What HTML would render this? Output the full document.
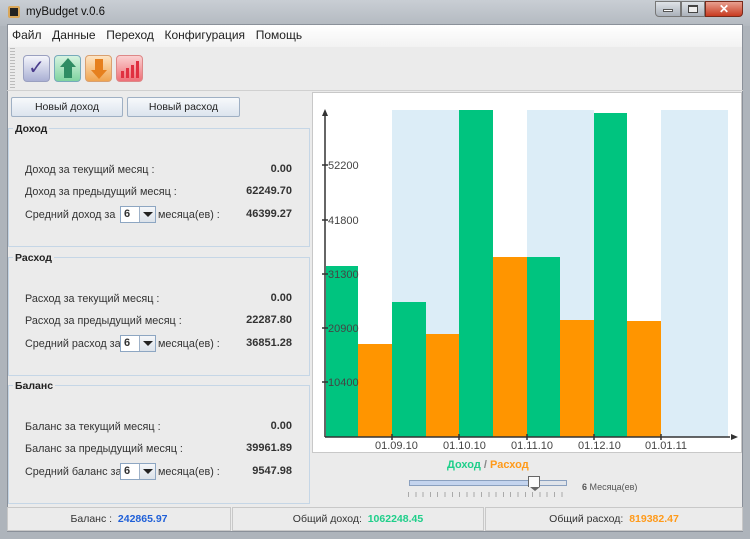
<!DOCTYPE html><html><head><meta charset="utf-8"><style>
*{margin:0;padding:0;box-sizing:border-box}
body{width:750px;height:539px;overflow:hidden;background:#aeb4bb;font-family:"Liberation Sans",sans-serif;font-size:11px;color:#333;position:relative}
.a{position:absolute}
.grp{position:absolute;left:8px;width:302px;border:1px solid #c5d6e6;background:#ebebeb}
.grp .t{position:absolute;left:4px;top:-6px;font-weight:bold;font-size:10.5px;background:#ebebeb;padding:0 2px;color:#222}
.lbl{position:absolute;left:16px;font-size:10.8px;color:#333}
.val{position:absolute;right:17px;font-weight:bold;font-size:11px;color:#333}
.cb{position:absolute;width:36px;height:17px;border:1px solid #8da6c2;background:#fff;font-weight:bold;font-size:11px;padding:1px 0 0 3px}
.cb i{position:absolute;right:0;top:0;width:16px;height:15px;border-left:1px solid #9fb2c8;background:linear-gradient(#f4f6f9,#dbe2ea)}
.cb i:after{content:"";position:absolute;left:3px;top:5px;border:5px solid transparent;border-top:5px solid #222;border-bottom:0}
.btn{position:absolute;top:97px;height:20px;border:1px solid #9fb0c4;border-radius:2px;background:linear-gradient(#f7f9fb,#dce4ee);text-align:center;font-size:10.5px;line-height:18px;color:#222}
.ic{position:absolute;top:55px;width:27px;height:27px;border-radius:4px}
</style></head><body>
<div class="a" style="left:0;top:0;width:750px;height:26px;background:linear-gradient(#c9ced4,#b3b9c0)"></div>
<div class="a" style="left:8px;top:6px;width:12px;height:12px;background:#222;border:2px solid #d9a75b;border-radius:2px"></div>
<div class="a" style="left:26px;top:6px;font-size:11.5px;color:#111">myBudget v.0.6</div>
<div class="a" style="left:655px;top:1px;width:26px;height:16px;border:1px solid #777;border-radius:0 0 0 4px;background:linear-gradient(#dfe3e8,#aab1ba)"></div>
<div class="a" style="left:663px;top:9px;width:10px;height:3px;background:#fff;border:1px solid #555"></div>
<div class="a" style="left:681px;top:1px;width:24px;height:16px;border:1px solid #777;background:linear-gradient(#dfe3e8,#aab1ba)"></div>
<div class="a" style="left:688px;top:5px;width:10px;height:8px;border:1px solid #444;border-top-width:2px;background:#eee"></div>
<div class="a" style="left:705px;top:1px;width:38px;height:16px;border:1px solid #7a2a1a;border-radius:0 0 4px 0;background:linear-gradient(#e8a090,#c83a20);color:#fff;font-weight:bold;text-align:center;font-size:12px;line-height:14px">✕</div>
<div class="a" style="left:7px;top:24px;width:736px;height:508px;background:#ebebeb;border:1px solid #8a9099"></div>
<div class="a" style="left:8px;top:25px;width:734px;height:22px;background:linear-gradient(#fff,#f2f2f2)"></div>
<div class="a" style="left:12px;top:28px;font-size:12px;color:#222;word-spacing:2px">Файл&nbsp; Данные&nbsp; Переход&nbsp; Конфигурация&nbsp; Помощь</div>
<div class="a" style="left:10px;top:48px;width:5px;height:40px;background:repeating-linear-gradient(#bbb 0 1px,transparent 1px 3px)"></div>
<div class="ic" style="left:23px;background:linear-gradient(#f4f5fb,#aab0d4);border:1px solid #9aa0c0;color:#4a3c8c;font-size:20px;text-align:center;line-height:25px">✓</div>
<div class="ic" style="left:54px;background:linear-gradient(#d6f3e0,#7fd3a0);border:1px solid #7ab"></div>
<div class="a" style="left:60px;top:58px;border:8px solid transparent;border-bottom:9px solid #2f8c64;border-top:0"></div>
<div class="a" style="left:64px;top:67px;width:8px;height:11px;background:#2f8c64"></div>
<div class="ic" style="left:85px;background:linear-gradient(#fde4c4,#f0a450);border:1px solid #d9a070"></div>
<div class="a" style="left:95px;top:59px;width:8px;height:11px;background:#e6801e"></div>
<div class="a" style="left:91px;top:70px;border:8px solid transparent;border-top:9px solid #e6801e;border-bottom:0"></div>
<div class="ic" style="left:116px;background:linear-gradient(#fbd0d0,#ee7078);border:1px solid #d88"></div>
<div class="a" style="left:121px;top:71px;width:3px;height:7px;background:#e03040"></div>
<div class="a" style="left:136px;top:61px;width:3px;height:17px;background:#e03040"></div>
<div class="a" style="left:126px;top:68px;width:3px;height:10px;background:#e03040"></div>
<div class="a" style="left:131px;top:65px;width:3px;height:13px;background:#e03040"></div>
<div class="a" style="left:7px;top:90px;width:736px;height:1px;background:#d0d0d0"></div>
<div class="btn" style="left:11px;width:112px">Новый доход</div>
<div class="btn" style="left:127px;width:113px">Новый расход</div>

<div class="grp" style="top:128px;height:119px"><div class="t">Доход</div>
<div class="lbl" style="top:35px">Доход за текущий месяц :</div><div class="val" style="top:34px">0.00</div>
<div class="lbl" style="top:57px">Доход за предыдущий месяц :</div><div class="val" style="top:56px">62249.70</div>
<div class="lbl" style="top:80px">Средний доход за</div><div class="cb" style="left:111px;top:77px">6<i></i></div><div class="lbl" style="left:149px;top:80px">месяца(ев) :</div><div class="val" style="top:79px">46399.27</div></div>

<div class="grp" style="top:257px;height:119px"><div class="t">Расход</div>
<div class="lbl" style="top:35px">Расход за текущий месяц :</div><div class="val" style="top:34px">0.00</div>
<div class="lbl" style="top:57px">Расход за предыдущий месяц :</div><div class="val" style="top:56px">22287.80</div>
<div class="lbl" style="top:80px">Средний расход за</div><div class="cb" style="left:111px;top:77px">6<i></i></div><div class="lbl" style="left:149px;top:80px">месяца(ев) :</div><div class="val" style="top:79px">36851.28</div></div>

<div class="grp" style="top:385px;height:119px"><div class="t">Баланс</div>
<div class="lbl" style="top:35px">Баланс за текущий месяц :</div><div class="val" style="top:34px">0.00</div>
<div class="lbl" style="top:57px">Баланс за предыдущий месяц :</div><div class="val" style="top:56px">39961.89</div>
<div class="lbl" style="top:80px">Средний баланс за</div><div class="cb" style="left:111px;top:77px">6<i></i></div><div class="lbl" style="left:149px;top:80px">месяца(ев) :</div><div class="val" style="top:79px">9547.98</div></div>

<svg class="a" style="left:312px;top:92px" width="430" height="361" viewBox="312 92 430 361">
<rect x="312.5" y="92.5" width="429" height="360" fill="#fff" stroke="#c8c8c8"/>
<g fill="#dcedf7"><rect x="392" y="110" width="67" height="327"/><rect x="527" y="110" width="67" height="327"/><rect x="661" y="110" width="67" height="327"/></g>
<g fill="#00c47f"><rect x="326" y="266" width="32" height="171"/><rect x="392" y="302" width="34" height="135"/><rect x="459" y="110" width="34" height="327"/><rect x="527" y="257" width="33" height="180"/><rect x="594" y="113" width="33" height="324"/></g>
<g fill="#ff9500"><rect x="358" y="344" width="34" height="93"/><rect x="426" y="334" width="33" height="103"/><rect x="493" y="257" width="34" height="180"/><rect x="560" y="320" width="34" height="117"/><rect x="627" y="321" width="34" height="116"/></g>
<g stroke="#333" stroke-width="1.5"><line x1="325" y1="437" x2="325" y2="113"/><line x1="325" y1="437" x2="730" y2="437"/>
<line x1="392" y1="434" x2="392" y2="440"/><line x1="459" y1="434" x2="459" y2="440"/><line x1="527" y1="434" x2="527" y2="440"/><line x1="594" y1="434" x2="594" y2="440"/><line x1="661" y1="434" x2="661" y2="440"/>
<line x1="322" y1="165" x2="328" y2="165"/><line x1="322" y1="220" x2="328" y2="220"/><line x1="322" y1="274" x2="328" y2="274"/><line x1="322" y1="328" x2="328" y2="328"/><line x1="322" y1="382" x2="328" y2="382"/></g>
<path d="M322 116 L325 109 L328 116Z M731 434 L738 437 L731 440Z" fill="#333"/>
<g font-family="Liberation Sans,sans-serif" font-size="11" fill="#444"><text x="328" y="169">52200</text><text x="328" y="224">41800</text><text x="328" y="278">31300</text><text x="328" y="332">20900</text><text x="328" y="386">10400</text>
<text x="375" y="449">01.09.10</text><text x="443" y="449">01.10.10</text><text x="511" y="449">01.11.10</text><text x="578" y="449">01.12.10</text><text x="645" y="449">01.01.11</text></g>
</svg>
<div class="a" style="left:447px;top:459px;font-weight:bold;font-size:11px"><span style="color:#1ecf8a">Доход</span> <span style="color:#888">/</span> <span style="color:#ff9a1a">Расход</span></div>
<div class="a" style="left:409px;top:480px;width:158px;height:6px;border:1px solid #8aa0bf;background:linear-gradient(90deg,#c4d4ee 0 77%,#e0e4ea 77%)"></div>
<div class="a" style="left:528px;top:476px;width:12px;height:11px;border:1px solid #666;border-bottom:none;background:#fafafa"></div>
<div class="a" style="left:530px;top:487px;border:5px solid transparent;border-top:4px solid #666;border-bottom:0"></div>
<div class="a" style="left:408px;top:492px;width:160px;height:5px;background:repeating-linear-gradient(90deg,#aaa 0 1px,transparent 1px 7.3px)"></div>
<div class="a" style="left:582px;top:482px;font-size:9px;color:#555"><b>6</b> Месяца(ев)</div>
<div class="a" style="left:7px;top:507px;width:224px;height:24px;border:1px solid #c8c8c8;text-align:center;line-height:22px;font-size:10.5px">Баланс : &nbsp;<b style="color:#2060d8">242865.97</b></div>
<div class="a" style="left:232px;top:507px;width:252px;height:24px;border:1px solid #c8c8c8;text-align:center;line-height:22px;font-size:10.5px">Общий доход: &nbsp;<b style="color:#1ecf8a">1062248.45</b></div>
<div class="a" style="left:485px;top:507px;width:258px;height:24px;border:1px solid #c8c8c8;text-align:center;line-height:22px;font-size:10.5px">Общий расход: &nbsp;<b style="color:#ff9a1a">819382.47</b></div>
</body></html>
